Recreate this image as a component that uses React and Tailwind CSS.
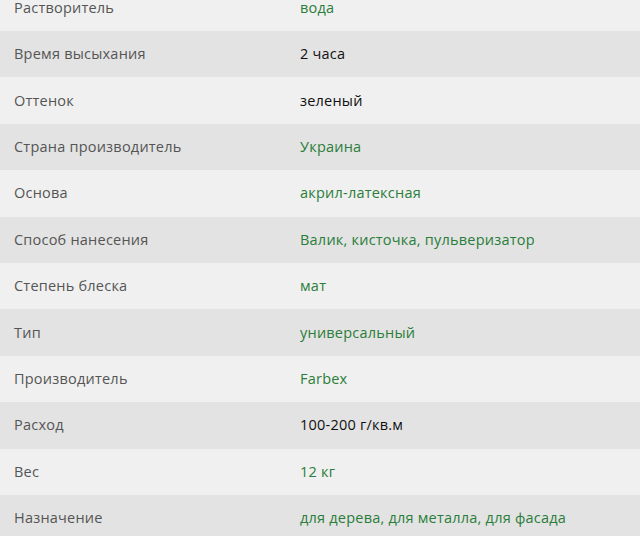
import React from "react";

const rows = [
  { name: "Растворитель", value: "вода", link: true },
  { name: "Время высыхания", value: "2 часа", link: false },
  { name: "Оттенок", value: "зеленый", link: false },
  { name: "Страна производитель", value: "Украина", link: true },
  { name: "Основа", value: "акрил-латексная", link: true },
  { name: "Способ нанесения", value: "Валик, кисточка, пульверизатор", link: true },
  { name: "Степень блеска", value: "мат", link: true },
  { name: "Тип", value: "универсальный", link: true },
  { name: "Производитель", value: "Farbex", link: true },
  { name: "Расход", value: "100-200 г/кв.м", link: false },
  { name: "Вес", value: "12 кг", link: true },
  { name: "Назначение", value: "для дерева, для металла, для фасада", link: true },
];

export default function App() {
  return (
    <div className="w-[640px] h-[536px] overflow-hidden bg-[#f0f0f0] font-['Open_Sans',sans-serif] text-[14.5px] tracking-[0.22px]">
      <div className="-mt-[15.4px]">
        {rows.map((row, i) => (
          <div
            key={row.name}
            className={`flex items-center h-[46.4px] ${i % 2 === 0 ? "bg-[#f0f0f0]" : "bg-[#e3e3e3]"}`}
          >
            <div className="w-[300px] pl-[14px] text-[#555555]">{row.name}</div>
            <div className={row.link ? "text-[#2a7d3a]" : "text-[#111111]"}>
              {row.value}
            </div>
          </div>
        ))}
      </div>
    </div>
  );
}
